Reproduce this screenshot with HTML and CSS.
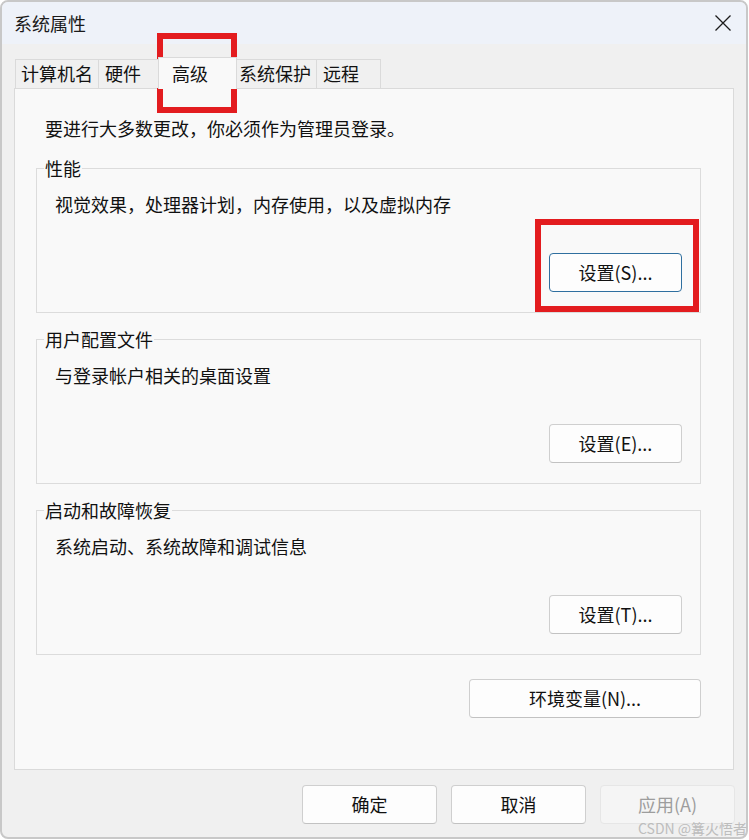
FILE: index.html
```html
<!DOCTYPE html>
<html lang="zh-CN">
<head>
<meta charset="utf-8">
<title>系统属性</title>
<link rel="stylesheet" href="styles.css">
</head>
<body>
<div class="screen">
  <div class="window">
    <header class="titlebar">
      <span class="title">系统属性</span>
      <svg class="close" width="16" height="16" viewBox="0 0 16 16" aria-hidden="true">
        <path d="M0.5 0.5 L15.5 15.5 M15.5 0.5 L0.5 15.5" stroke="#1c1c1c" stroke-width="1.3" fill="none"/>
      </svg>
    </header>

    <nav class="tabs">
      <div class="tab tab-name">计算机名</div>
      <div class="tab tab-hw">硬件</div>
      <div class="tab tab-adv is-active">高级</div>
      <div class="tab tab-protect">系统保护</div>
      <div class="tab tab-remote">远程</div>
    </nav>

    <section class="panel">
      <p class="intro">要进行大多数更改，你必须作为管理员登录。</p>

      <fieldset class="group">
        <legend>性能</legend>
        <p class="group-desc">视觉效果，处理器计划，内存使用，以及虚拟内存</p>
        <div class="group-actions"><button class="btn btn-group btn-default">设置(S)...</button></div>
      </fieldset>

      <fieldset class="group">
        <legend>用户配置文件</legend>
        <p class="group-desc">与登录帐户相关的桌面设置</p>
        <div class="group-actions"><button class="btn btn-group">设置(E)...</button></div>
      </fieldset>

      <fieldset class="group">
        <legend>启动和故障恢复</legend>
        <p class="group-desc">系统启动、系统故障和调试信息</p>
        <div class="group-actions"><button class="btn btn-group">设置(T)...</button></div>
      </fieldset>

      <div class="panel-actions"><button class="btn btn-wide">环境变量(N)...</button></div>
    </section>

    <footer class="dialog-actions">
      <button class="btn btn-dialog">确定</button>
      <button class="btn btn-dialog">取消</button>
      <button class="btn btn-dialog is-disabled">应用(A)</button>
    </footer>
  </div>

  <div class="mark mark-tab"></div>
  <div class="mark mark-btn"></div>
  <div class="watermark">CSDN @篝火悟者</div>
</div>
</body>
</html>
```

FILE: styles.css
```css
* { box-sizing: border-box; }

html, body {
  margin: 0;
  padding: 0;
  background: #ffffff;
}

body {
  font-family: "Noto Sans CJK SC", "Noto Sans", sans-serif;
  font-size: 18px;
  color: #111;
}

.screen {
  position: relative;
  width: 749px;
  height: 840px;
}

.window {
  width: 748px;
  height: 839px;
  border: 2px solid #c8c8c8;
  border-radius: 8px;
  background: #f0f0f0;
  overflow: hidden;
}

.titlebar {
  height: 42px;
  background: #eef2f9;
  display: flex;
  align-items: center;
  justify-content: space-between;
  padding: 0 15px 0 12px;
}

.title {
  font-size: 18px;
  line-height: 24px;
  color: #1a1a1a;
}

.close { display: block; }

/* Tabs */
.tabs {
  display: flex;
  align-items: flex-end;
  margin: 15px 0 0 13px;
  height: 29px;
  position: relative;
  z-index: 1;
}

.tab {
  height: 29px;
  line-height: 27px;
  border: 1px solid #dadada;
  border-bottom: none;
  background: #f0f0f0;
  margin-right: -1px;
  white-space: nowrap;
  color: #111;
}

.tab-name { padding: 0 5px 0 5px; }
.tab-hw { padding: 0 17px 0 6px; }
.tab-adv { padding: 0 28px 0 13px; }
.tab-protect { padding: 0 5px 0 2px; }
.tab-remote { padding: 0 21px 0 6px; }

.tab.is-active {
  height: 32px;
  line-height: 31px;
  margin-bottom: -1px;
  background: #f9f9f9;
  position: relative;
  z-index: 2;
}

/* Panel */
.panel {
  margin-left: 12px;
  width: 720px;
  height: 682px;
  border: 1px solid #dadada;
  background: #f9f9f9;
  padding: 27px 32px 0 21px;
}

.intro {
  margin: 0 0 16px 9px;
  line-height: 24px;
}

.group {
  margin: 0 0 14px 0;
  padding: 12px 18px 20px 0;
  border: 1px solid #dcdcdc;
  min-inline-size: auto;
}

.group legend {
  margin-left: 7px;
  padding: 0 1px;
  line-height: 24px;
  font-size: 18px;
}

.group-desc {
  margin: 0 0 0 18px;
  line-height: 24px;
}

.group-actions {
  display: flex;
  justify-content: flex-end;
  margin-top: 37px;
}

.panel-actions {
  display: flex;
  justify-content: flex-end;
  margin-top: 24px;
}

/* Buttons */
.btn {
  font-family: "Noto Sans CJK SC", "Noto Sans", sans-serif;
  font-size: 18px;
  color: #111;
  height: 39px;
  line-height: 37px;
  padding: 0;
  background: #fdfdfd;
  border: 1px solid #cfcfcf;
  border-bottom-color: #c2c2c2;
  border-radius: 4px;
  text-align: center;
}

.btn-group { width: 133px; }
.btn-wide { width: 232px; }
.btn-dialog { width: 135px; }

.btn-default {
  border: 1px solid #2f6f9f;
}

.btn.is-disabled {
  background: #f5f5f5;
  border-color: #e6e6e6;
  color: #9d9d9d;
}

.dialog-actions {
  display: flex;
  justify-content: flex-end;
  gap: 14px;
  margin-top: 15px;
  padding-right: 11px;
}

/* Annotation overlays */
.mark {
  position: absolute;
  border: 6px solid #e31c1f;
}

.mark-tab {
  left: 157px;
  top: 33px;
  width: 80px;
  height: 80px;
}

.mark-btn {
  left: 535px;
  top: 219px;
  width: 164px;
  height: 93px;
}

.watermark {
  position: absolute;
  left: 638px;
  top: 819px;
  font-size: 14px;
  line-height: 18px;
  color: #bdbdbd;
  white-space: nowrap;
}
```
